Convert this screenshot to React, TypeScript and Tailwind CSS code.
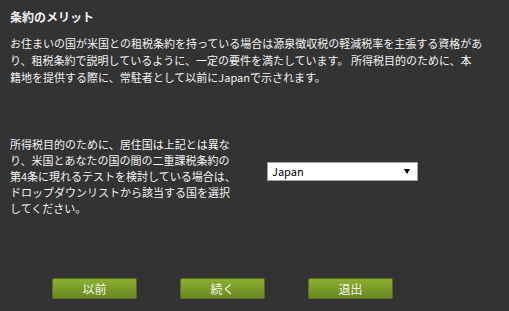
import React from 'react'

const font = { fontFamily: '"Noto Sans CJK JP", "Noto Sans", sans-serif' }

function GreenButton({ label }: { label: string }) {
  return (
    <button className="w-[85px] h-[21px] rounded-[2px] border border-[#566d1d] bg-gradient-to-b from-[#8daf30] to-[#6a8923] text-[12px] leading-[19px] text-[#f4f4ee]">
      {label}
    </button>
  )
}

export default function App() {
  return (
    <div style={font} className="w-full h-[311px] bg-[#333333] text-[#f2f2f2] px-[10px] pt-[8px] overflow-hidden">
      <h2 className="text-[12px] leading-[17px] font-bold">条約のメリット</h2>
      <p className="mt-[10px] text-[11px] leading-[17px] whitespace-nowrap">
        お住まいの国が米国との租税条約を持っている場合は源泉徴収税の軽減税率を主張する資格があ
        <br />
        り、租税条約で説明しているように、一定の要件を満たしています。 所得税目的のために、本
        <br />
        籍地を提供する際に、常駐者として以前にJapanで示されます。
      </p>

      <div className="mt-[50px] flex items-start">
        <p className="w-[257px] text-[11px] leading-[16px] whitespace-nowrap">
          所得税目的のために、居住国は上記とは異な
          <br />
          り、米国とあなたの国の間の二重課税条約の
          <br />
          第4条に現れるテストを検討している場合は、
          <br />
          ドロップダウンリストから該当する国を選択
          <br />
          してください。
        </p>
        <div className="relative mt-[26px] w-[151px] h-[19px]">
          <select
            defaultValue="Japan"
            className="block appearance-none w-full h-full bg-white border border-[#a0a0a0] pl-[4px] text-[11px] leading-[17px] text-black outline-none"
          >
            <option value="Japan">Japan</option>
          </select>
          <svg
            className="pointer-events-none absolute right-[8px] top-[7px]"
            width="6"
            height="5"
            viewBox="0 0 6 5"
          >
            <path d="M0 0 H6 L3 5 Z" fill="#000" />
          </svg>
        </div>
      </div>

      <div className="mt-[62px] pl-[42px] flex gap-[43px]">
        <GreenButton label="以前" />
        <GreenButton label="続く" />
        <GreenButton label="退出" />
      </div>
    </div>
  )
}
